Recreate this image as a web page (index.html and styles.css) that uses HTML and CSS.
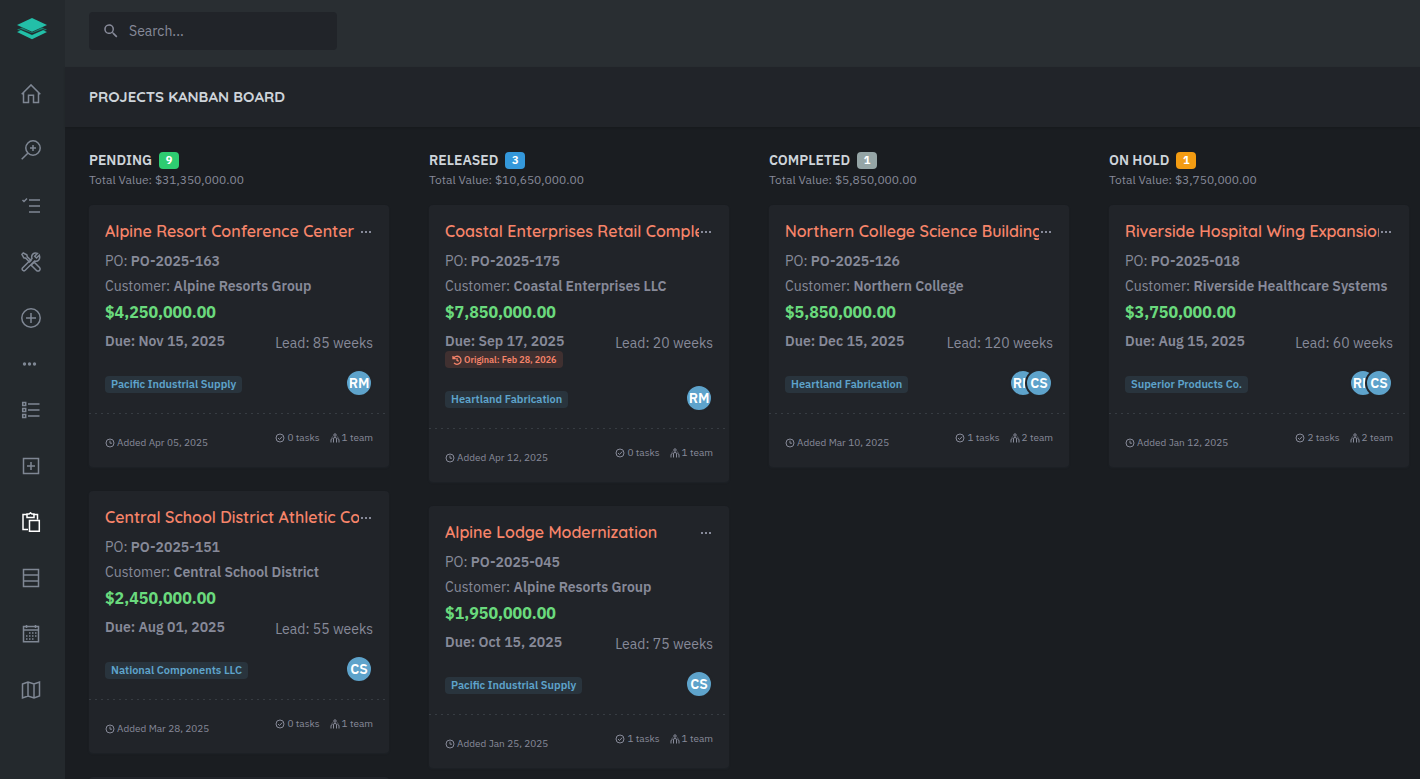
FILE: index.html
```
<!DOCTYPE html>
<html lang="en">
<head>
<meta charset="utf-8">
<title>Projects Kanban Board</title>
<link rel="stylesheet" href="styles.css">
</head>
<body>
<svg class="defs" aria-hidden="true">
  <symbol id="i-dots" viewBox="0 0 14 4"><g fill="currentColor"><rect x="2" y="1" width="2" height="2"/><rect x="6" y="1" width="2" height="2"/><rect x="10" y="1" width="2" height="2"/></g></symbol>
  <symbol id="i-clock" viewBox="0 0 10 10"><g fill="none" stroke="currentColor"><circle cx="5" cy="5" r="4"/><path d="M5 2.6V5.2H7"/></g></symbol>
  <symbol id="i-check" viewBox="0 0 10 10"><g fill="none" stroke="currentColor"><circle cx="5" cy="5" r="4"/><path d="M3 5l1.500 1.500L7.200 3.600"/></g></symbol>
  <symbol id="i-team" viewBox="0 0 10 10"><g fill="none" stroke="currentColor"><circle cx="5" cy="2" r="1.200"/><path d="M3.500 9.500V6Q3.500 4.200 5 4.200T6.500 6V9.500M2.700 3.600L2 4.600M7.300 3.600L8 4.600M1 9.500V7Q1 5.500 2.500 5.500M9 9.500V7Q9 5.500 7.500 5.500"/></g></symbol>
  <symbol id="i-history" viewBox="0 0 10 10"><g fill="none" stroke="currentColor" stroke-width="1.300"><path d="M1.600 3.200A4 4 0 1 1 2 7.900M1 1v2.600h2.800M5 3v2.300l1.700 1"/></g></symbol>
</svg>
<div class="app">
  <nav class="sidebar" aria-label="Main">
    <a class="logo" href="#" aria-label="Dashboard"><svg width="30" height="22" viewBox="0 0 30 22"><path fill="#16806f" d="M0 11.500L5 9.500 15 14.500 25 9.500 30 11.500 15 18.500z"/><path fill="#23bfa8" d="M0 14L4 12.300 15 17.300 26 12.300 30 14 15 21.200z"/><path fill="#24292d" d="M0 9.500L15 15.300 30 9.500 27 11.500 15 16.700 3 11.500z"/><path fill="#23bfa8" d="M15 0L30 7 15 13.800 0 7z"/></svg></a>
    <a href="#" aria-label="Home"><svg viewBox="0 0 20 20"><path d="M.700 10.200L10 .900l9.300 9.300M2.500 8.500v10h5V11.200h5v7.300h5V8.500"/></svg></a>
    <a href="#" aria-label="Explore"><svg viewBox="0 0 20 20"><circle cx="12" cy="8" r="7.200"/><path d="M6.800 13.200L.700 19.300M12 5v6M9 8h6"/></svg></a>
    <a href="#" aria-label="Tasks"><svg viewBox="0 0 20 20"><path d="M8 4h11M8 10h11M8 16h11M1.500 4l1.500 1.500L6 2.500"/></svg></a>
    <a href="#" aria-label="Tools"><svg viewBox="0 0 20 20"><path d="M2.200 1L.900 2.300l1.900 3.500 2 .500L8.500 10 10 8.500 6.300 4.800l-.500-2zM11.500 11.500l2-1 5 5a2.100 2.100 0 0 1-3 3l-5-5zM18.300 3.200l-2.800 2.800-1.800-1.800 2.800-2.800C12.500 0 9.800 3 11 6.500L1.500 16a1.800 1.800 0 0 0 2.500 2.500L13.500 9c3.500 1.200 6.200-2 4.800-5.800z"/></svg></a>
    <a href="#" aria-label="Add"><svg viewBox="0 0 20 20"><circle cx="10" cy="10" r="9.200"/><path d="M10 5v10M5 10h10"/></svg></a>
    <span class="more"><svg viewBox="0 0 20 4"><g fill="currentColor" stroke="none"><circle cx="3.500" cy="2" r="1.700"/><circle cx="8.500" cy="2" r="1.700"/><circle cx="13.500" cy="2" r="1.700"/></g></svg></span>
    <a href="#" aria-label="List"><svg viewBox="0 0 20 20"><path d="M1.700 2.500h3v3h-3zM1.700 8.500h3v3h-3zM1.700 14.500h3v3h-3zM7 4h11.500M7 10h11.500M7 16h11.500"/></svg></a>
    <a href="#" aria-label="New"><svg viewBox="0 0 20 20"><path d="M2.500 2.500h15v15h-15zM10 6v8M6 10h8"/></svg></a>
    <a class="active" href="#" aria-label="Projects"><svg viewBox="0 0 20 20"><path d="M7 17.500H2V2.500h4.500M12 2.500h4.500v5M6 5.500h7V2h-2L9.500.800 8 2H6zM8.500 8.500h9.800v10.800H8.500z"/></svg></a>
    <a href="#" aria-label="Servers"><svg viewBox="0 0 20 20"><path d="M2.500 1.500h15v17h-15zM2.500 7h15M2.500 13h15"/></svg></a>
    <a href="#" aria-label="Calendar"><svg viewBox="0 0 20 20"><path d="M2.500 2.500h15v15.300h-15zM2.500 6h15M5.500 1v3M14.500 1v3"/><path stroke-dasharray="1.500 1.500" d="M8 9h8M5 12h11M5 15h8"/></svg></a>
    <a href="#" aria-label="Map"><svg viewBox="0 0 20 20"><path d="M1.500 4L7 2l6 2 5.500-2v14L13 18l-6-2-5.500 2zM7 2v14M13 4v14"/></svg></a>
  </nav>
  <div class="page">
    <header class="topbar">
      <label class="search"><svg viewBox="0 0 24 24"><path fill="currentColor" d="M15.500 14h-.8l-.3-.3A6.500 6.500 0 1 0 13.700 14.400l.3.300v.8l5 5 1.500-1.500zm-6 0a4.500 4.500 0 1 1 0-9 4.500 4.500 0 0 1 0 9z"/></svg><input type="search" placeholder="Search..." aria-label="Search"></label>
    </header>
    <div class="titlebar"><h1>PROJECTS KANBAN BOARD</h1></div>
    <main class="board">
      <section class="column">
        <header class="column-head"><h2>PENDING <span class="count green">9</span></h2><p>Total Value: $31,350,000.00</p></header>
        <article class="card">
          <div class="card-top"><h3><a href="#">Alpine Resort Conference Center</a></h3><button type="button" aria-label="Options"><svg><use href="#i-dots"/></svg></button></div>
          <p class="info">PO: <b>PO-2025-163</b></p><p class="info">Customer: <b>Alpine Resorts Group</b></p>
          <p class="value">$4,250,000.00</p>
          <div class="dates"><div><b>Due: Nov 15, 2025</b></div><span class="lead">Lead: 85 weeks</span></div>
          <div class="people"><span class="tag">Pacific Industrial Supply</span><div class="avatars"><span>RM</span></div></div>
          <footer><span class="added"><svg><use href="#i-clock"/></svg>Added Apr 05, 2025</span><span class="stats"><span><svg><use href="#i-check"/></svg>0 tasks</span><span><svg><use href="#i-team"/></svg>1 team</span></span></footer>
        </article>
        <article class="card">
          <div class="card-top"><h3><a href="#">Central School District Athletic Complex</a></h3><button type="button" aria-label="Options"><svg><use href="#i-dots"/></svg></button></div>
          <p class="info">PO: <b>PO-2025-151</b></p><p class="info">Customer: <b>Central School District</b></p>
          <p class="value">$2,450,000.00</p>
          <div class="dates"><div><b>Due: Aug 01, 2025</b></div><span class="lead">Lead: 55 weeks</span></div>
          <div class="people"><span class="tag">National Components LLC</span><div class="avatars"><span>CS</span></div></div>
          <footer><span class="added"><svg><use href="#i-clock"/></svg>Added Mar 28, 2025</span><span class="stats"><span><svg><use href="#i-check"/></svg>0 tasks</span><span><svg><use href="#i-team"/></svg>1 team</span></span></footer>
        </article>
        <article class="card"></article>
      </section>
      <section class="column">
        <header class="column-head"><h2>RELEASED <span class="count blue">3</span></h2><p>Total Value: $10,650,000.00</p></header>
        <article class="card">
          <div class="card-top"><h3><a href="#">Coastal Enterprises Retail Complex</a></h3><button type="button" aria-label="Options"><svg><use href="#i-dots"/></svg></button></div>
          <p class="info">PO: <b>PO-2025-175</b></p><p class="info">Customer: <b>Coastal Enterprises LLC</b></p>
          <p class="value">$7,850,000.00</p>
          <div class="dates"><div><b>Due: Sep 17, 2025</b><span class="original"><svg><use href="#i-history"/></svg>Original: Feb 28, 2026</span></div><span class="lead">Lead: 20 weeks</span></div>
          <div class="people"><span class="tag">Heartland Fabrication</span><div class="avatars"><span>RM</span></div></div>
          <footer><span class="added"><svg><use href="#i-clock"/></svg>Added Apr 12, 2025</span><span class="stats"><span><svg><use href="#i-check"/></svg>0 tasks</span><span><svg><use href="#i-team"/></svg>1 team</span></span></footer>
        </article>
        <article class="card">
          <div class="card-top"><h3><a href="#">Alpine Lodge Modernization</a></h3><button type="button" aria-label="Options"><svg><use href="#i-dots"/></svg></button></div>
          <p class="info">PO: <b>PO-2025-045</b></p><p class="info">Customer: <b>Alpine Resorts Group</b></p>
          <p class="value">$1,950,000.00</p>
          <div class="dates"><div><b>Due: Oct 15, 2025</b></div><span class="lead">Lead: 75 weeks</span></div>
          <div class="people"><span class="tag">Pacific Industrial Supply</span><div class="avatars"><span>CS</span></div></div>
          <footer><span class="added"><svg><use href="#i-clock"/></svg>Added Jan 25, 2025</span><span class="stats"><span><svg><use href="#i-check"/></svg>1 tasks</span><span><svg><use href="#i-team"/></svg>1 team</span></span></footer>
        </article>
      </section>
      <section class="column">
        <header class="column-head"><h2>COMPLETED <span class="count gray">1</span></h2><p>Total Value: $5,850,000.00</p></header>
        <article class="card">
          <div class="card-top"><h3><a href="#">Northern College Science Building</a></h3><button type="button" aria-label="Options"><svg><use href="#i-dots"/></svg></button></div>
          <p class="info">PO: <b>PO-2025-126</b></p><p class="info">Customer: <b>Northern College</b></p>
          <p class="value">$5,850,000.00</p>
          <div class="dates"><div><b>Due: Dec 15, 2025</b></div><span class="lead">Lead: 120 weeks</span></div>
          <div class="people"><span class="tag">Heartland Fabrication</span><div class="avatars"><span>RM</span><span>CS</span></div></div>
          <footer><span class="added"><svg><use href="#i-clock"/></svg>Added Mar 10, 2025</span><span class="stats"><span><svg><use href="#i-check"/></svg>1 tasks</span><span><svg><use href="#i-team"/></svg>2 team</span></span></footer>
        </article>
      </section>
      <section class="column">
        <header class="column-head"><h2>ON HOLD <span class="count orange">1</span></h2><p>Total Value: $3,750,000.00</p></header>
        <article class="card">
          <div class="card-top"><h3><a href="#">Riverside Hospital Wing Expansion</a></h3><button type="button" aria-label="Options"><svg><use href="#i-dots"/></svg></button></div>
          <p class="info">PO: <b>PO-2025-018</b></p><p class="info">Customer: <b>Riverside Healthcare Systems</b></p>
          <p class="value">$3,750,000.00</p>
          <div class="dates"><div><b>Due: Aug 15, 2025</b></div><span class="lead">Lead: 60 weeks</span></div>
          <div class="people"><span class="tag">Superior Products Co.</span><div class="avatars"><span>RM</span><span>CS</span></div></div>
          <footer><span class="added"><svg><use href="#i-clock"/></svg>Added Jan 12, 2025</span><span class="stats"><span><svg><use href="#i-check"/></svg>2 tasks</span><span><svg><use href="#i-team"/></svg>2 team</span></span></footer>
        </article>
      </section>
    </main>
  </div>
</div>
</body>
</html>
```
FILE: styles.css
```
* { box-sizing: border-box; }
body { margin: 0; background: #1a1d21; color: #878a99; font: 14px/20px "IBM Plex Sans", Inter, sans-serif; }
h1, h2, h3, p { margin: 0; }
a { color: inherit; text-decoration: none; }
b { font-weight: 600; }
.defs { display: none; }
.app { display: flex; height: 100vh; overflow: hidden; }

.sidebar { flex: 0 0 65px; background: #24292d; display: flex; flex-direction: column; align-items: flex-start; padding: 18px 0 0 17px; gap: 36px; color: #7f8794; }
.sidebar a, .more { display: flex; padding-left: 4px; }
.sidebar svg { display: block; width: 20px; height: 20px; fill: none; stroke: currentColor; stroke-width: 1.5; }
.sidebar .logo { padding: 0; margin-bottom: 8px; }
.sidebar .logo svg { width: 30px; height: 22px; stroke: none; }
.sidebar .more svg { height: 4px; }
.sidebar .more { margin: -2px 0; }
.sidebar .active { color: #fff; }

.page { flex: 1; min-width: 0; display: flex; flex-direction: column; }
.topbar { background: #292e32; padding: 12px 24px 17px; }
.search { display: flex; align-items: center; gap: 9px; width: 248px; height: 38px; padding: 0 13px; background: #212429; border-radius: 4px; }
.search svg { width: 18px; height: 18px; flex: none; }
.search input { flex: 1; min-width: 0; border: 0; padding: 0; outline: 0; background: none; color: #ced4da; font: inherit; }
.search input::placeholder { color: #878a99; opacity: 1; }
.titlebar { background: #212429; padding: 20px 24px; box-shadow: 0 1px 2px rgba(0, 0, 0, .15); }
h1 { font: 700 15px/20px Quicksand, Lato, sans-serif; color: #ced4da; }

.board { flex: 1; min-height: 0; display: flex; align-items: flex-start; gap: 40px; padding: 24px 24px 0; overflow: hidden; }
.column { flex: none; width: 300px; display: flex; flex-direction: column; gap: 24px; }
.column-head { margin-bottom: -8px; }
h2 { display: flex; align-items: center; gap: 7px; font-size: 14px; line-height: 18px; font-weight: 600; color: #ced4da; }
.count { width: 20px; border-radius: 4px; color: #fff; font-size: 11px; line-height: 17px; font-weight: 700; text-align: center; }
.green { background: #2ecc71; }
.blue { background: #3498db; }
.gray { background: #95a5a6; }
.orange { background: #f39c12; }
.column-head p { font-size: 12px; line-height: 18px; padding-top: 2px; }

.card { background: #212429; border-radius: 4px; padding: 16px; min-height: 262px; box-shadow: 0 1px 2px rgba(56, 65, 74, .15); }
.card-top { display: flex; align-items: center; margin-bottom: 10px; }
h3 { flex: 1; min-width: 0; overflow: hidden; white-space: nowrap; font: 600 16px/20px Quicksand, Lato, sans-serif; color: #f7846a; }
.card-top button { width: 14px; height: 20px; padding: 2px 0 0; border: 0; background: none; color: inherit; }
.card-top button svg { display: block; width: 14px; height: 4px; }
.info { margin-bottom: 5px; }
.value { margin-top: -1px; margin-bottom: 7px; font-size: 16px; line-height: 24px; font-weight: 700; color: #6ada7d; }
.dates { display: flex; justify-content: space-between; align-items: flex-start; }
.dates > div { display: flex; flex-direction: column; align-items: flex-start; }
.lead { padding-top: 2px; }
.original { display: flex; align-items: center; gap: 2px; padding: 0 7px; border-radius: 4px; background: #403030; color: #f7846a; font-size: 9px; line-height: 17px; font-weight: 600; }
.original svg { width: 10px; height: 10px; }
.people { display: flex; justify-content: space-between; align-items: center; padding: 16px 0; }
.tag { margin-top: 2px; padding: 0 6px; border-radius: 4px; background: #29343d; color: #5ea3cb; font-size: 11px; line-height: 17px; font-weight: 600; }
.avatars { display: flex; }
.avatars span { width: 28px; height: 28px; border: 2px solid #212429; border-radius: 50%; background: #5ea3cb; color: #fff; font-size: 14px; line-height: 24px; font-weight: 600; display: flex; justify-content: center; }
.avatars span + span { margin-left: -12px; }
.card footer { display: flex; justify-content: space-between; align-items: flex-start; min-height: 38px; margin: 0 -16px; padding: 17px 16px 0; background: repeating-linear-gradient(90deg, #373c42 0 2px, transparent 2px 6px) top / 100% 1px no-repeat; font-size: 10px; line-height: 15px; }
.added { display: flex; align-items: center; gap: 2px; padding-top: 5px; }
.stats { display: flex; gap: 10px; }
.stats > span { display: flex; align-items: center; gap: 2px; height: 15px; }
.card footer svg { width: 10px; height: 10px; }
```
